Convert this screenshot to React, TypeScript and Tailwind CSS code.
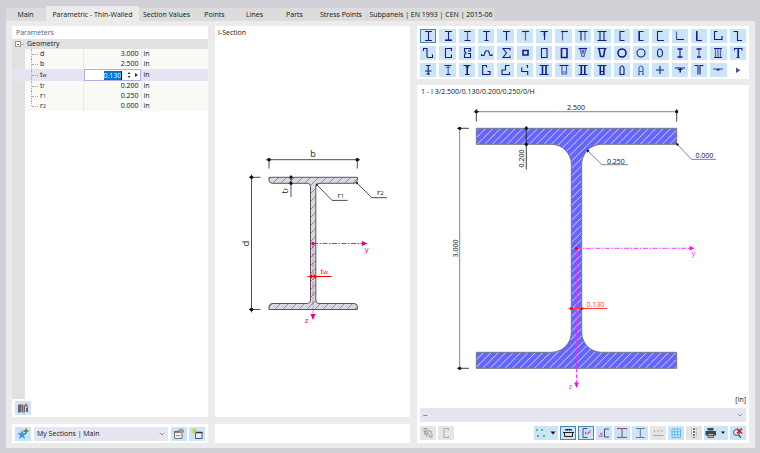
import type { ReactNode } from 'react'
import { ChevronDown } from 'lucide-react'

const tabs = ['Main', 'Parametric - Thin-Walled', 'Section Values', 'Points', 'Lines', 'Parts', 'Stress Points', 'Subpanels | EN 1993 | CEN | 2015-06']

const tabWidths = ['w-10', 'w-[93px]', 'w-14', 'w-10', 'w-10', 'w-10', 'w-[53px]', 'w-[127px]']

interface Param {
  name: string
  sub?: string
  value: string
}

const params: Param[] = [
  { name: 'd', value: '3.000' },
  { name: 'b', value: '2.500' },
  { name: 't', sub: 'w', value: '0.130' },
  { name: 't', sub: 'f', value: '0.200' },
  { name: 'r', sub: '1', value: '0.250' },
  { name: 'r', sub: '2', value: '0.000' },
]

// d: full-strength strokes, t: heavy strokes, l: faded strokes, on a 16 x 14 box
interface Shape {
  label: string
  d?: string
  t?: string
  l?: string
}

const shapes: Shape[] = [
  { label: 'I-section', d: 'M5 2.5h7M5 11.5h7M8.5 2.5v9' },
  { label: 'I-section, heavy flanges', d: 'M5 2.5h7M8.5 2.5v9', t: 'M5 11.2h7' },
  { label: 'I-section, tapered', d: 'M5 2.5h7M5.5 11.5h6', l: 'M8.5 2.5v9' },
  { label: 'I-section, unsymmetric', d: 'M5 2.5h7M6.5 11.5h4M8.5 2.5v9' },
  { label: 'T-section', d: 'M5 2.5h7M8.5 2.5v9' },
  { label: 'T-section, rolled', d: 'M5 2.5h7', l: 'M8.5 2.5v9' },
  { label: 'T-section, tapered', d: 'M4.5 2.5h7.5M8.5 2.5v8.500', t: 'M8.5 3v4' },
  { label: 'T-section, offset', d: 'M5 2.5h7', l: 'M6.5 2.5v9' },
  { label: 'Double T', d: 'M3.5 2.5h9M6 2.5v9', l: 'M10 2.5v9' },
  { label: 'Double web I', d: 'M3.5 2.5h9M3.5 11.5h9M6 2.5v9M10 2.5v9' },
  { label: 'Channel', d: 'M10.5 2.5H6V11.5H10.5' },
  { label: 'Channel, heavy', d: 'M10.5 2.5H6.5M6.5 11.5H10.5', t: 'M6.2 2v10' },
  { label: 'Channel, unsymmetric', d: 'M10.5 2.5H5.500V11.5H12' },
  { label: 'Angle', l: 'M4.5 2.5v8', d: 'M4.5 10.5h7.5' },
  { label: 'Angle, heavy', t: 'M5.8 2v9.500', d: 'M5.500 11.5h5.500' },
  { label: 'Angle with lips', d: 'M7.5 2.5H4.5V10.5h7.5V7' },
  { label: 'Z-section', d: 'M3.5 2.5h4v9h4.500' },
  { label: 'Z-section with lips', d: 'M3.5 5V2.5h3.500v8q0 1 1 1h4.500v-3' },
  { label: 'C-section', d: 'M11.5 5V2.5H5.5v9h6v-3' },
  { label: 'Stiffened C', d: 'M9 5h2.5V2.5H5.5v3L7 7L5.500 8.500v3h6v-4H9' },
  { label: 'Hat section', d: 'M3.500 8v1.500h2.500L7.5 5h3l1.500 4.500h2V8' },
  { label: 'Sigma section', d: 'M12 4.500V2.5H5L8.500 7L5 11.5h7v-2' },
  { label: 'Square tube', t: 'M6 4.500h5v4.500H6z' },
  { label: 'Rectangular tube', d: 'M5.500 2.5h5.500v9H5.500z' },
  { label: 'Box section', d: 'M5 2.5h6', t: 'M5.500 2v9.500h5.500V2' },
  { label: 'Trapezoid', d: 'M3.500 2.5h8.500', l: 'M5 2.5l2 8h2l2-8M7 3.500l1 4l1-4' },
  { label: 'Trapezoid, closed', d: 'M3.500 2.5h9', t: 'M5 2.5l1.500 8h3L11 2.5' },
  { label: 'Pipe', t: 'M12 7a4 4 0 1 1-8 0a4 4 0 1 1 8 0' },
  { label: 'Thin pipe', d: 'M12 7a4 4 0 1 1-8 0a4 4 0 1 1 8 0' },
  { label: 'Elliptical pipe', d: 'M10.500 7a2.500 4 0 1 1-5 0a2.500 4 0 1 1 5 0' },
  { label: 'Rail-type I', t: 'M5.500 3h5M5.500 11h5', d: 'M8 3v8.500' },
  { label: 'Rail-type I, slim', t: 'M5.500 3h5M6 11h4', l: 'M8 3v8.500' },
  { label: 'Paired channels', d: 'M4 2.5h8M4 11.5h8', l: 'M5.500 2.5v9M8 2.5v9M10.500 2.5v9' },
  { label: 'T with lips', d: 'M4.500 4.500V2.5h7.500v2M6.500 11.5h3', t: 'M8.200 2.5v9' },
  { label: 'I with stiffener', d: 'M6 2.500h4.500M5 8h6.500M8.200 2v10M6.500 11h3.500' },
  { label: 'I with plate', d: 'M4.500 2.5h7M6 11.5h4.500', l: 'M6 4.500h4M8.200 2.5v9' },
  { label: 'T with foot', d: 'M4.500 2.5h7M6 11.5h4.500M6.500 4h3.500', t: 'M8.200 2.5v9' },
  { label: 'Folded channel', d: 'M8.500 4.500V2.5H4.700v9H12V8.500H9.500' },
  { label: 'Folded angle', d: 'M11.500 2.5H7.500V7H4v4.500h7.500V9' },
  { label: 'Stepped angle', d: 'M11 2.500H9.500M10.500 2v3M4.700 4.500v4h6v3.500' },
  { label: 'Two I-sections', d: 'M3.500 2.5h9M3.500 11.5h9', t: 'M6.500 2.5v9M10 2.5v9' },
  { label: 'Double web T', d: 'M3.500 2.5h9', l: 'M6 2.5v8.500h4.500v-8.500M6 9h4.500' },
  { label: 'Two I with plate', d: 'M3.500 2.5h9M3.500 11.5h9', t: 'M6.300 3v8.500M9.800 3v8.500' },
  { label: 'Two T-sections', d: 'M3.500 2.5h9M5.500 11.5h5M6 8.500h4', t: 'M6.300 2.5v9M9.800 2.5v9' },
  { label: 'Arch tube', d: 'M6 11.5V5q2-4.500 4 0v6.500z' },
  { label: 'Arch tube, open', l: 'M6 11.500V5q2-4.500 4 0v6.500M5 11.500h2M9 11.500h2M6 8.500h4' },
  { label: 'Cruciform', d: 'M8 3v8M4 7h8' },
  { label: 'Wide T', d: 'M3 5h10M6 6.500h4.500', t: 'M8.200 5v4.500' },
  { label: 'Back-to-back angles', d: 'M3.500 2.5h3.500v9M12.500 2.5H9v9' },
  { label: 'Shallow T', l: 'M3 6h10', t: 'M6.500 6.700h3' },
]

function ShapeIcon({ shape }: { shape: Shape }) {
  return (
    <svg viewBox="0 0 16 14" className="h-[14px] w-4" fill="none" stroke="#171c8e" aria-hidden="true">
      {shape.l && <path d={shape.l} strokeWidth="1.2" opacity=".65" />}
      {shape.d && <path d={shape.d} strokeWidth="1.1" />}
      {shape.t && <path d={shape.t} strokeWidth="1.6" />}
    </svg>
  )
}

interface ToolButtonProps {
  label: string
  state?: 'normal' | 'active' | 'disabled'
  wide?: boolean
  children: ReactNode
}

function ToolButton({ label, state = 'normal', wide, children }: ToolButtonProps) {
  const colors = {
    normal: 'bg-[#cce4f7]',
    active: 'bg-[#cce4f7] outline outline-1 -outline-offset-1 outline-[#4c88b8]',
    disabled: 'bg-[#e5e5e5]',
  }[state]
  return (
    <button
      type="button"
      aria-label={label}
      disabled={state === 'disabled'}
      className={`flex h-[14px] shrink-0 items-center justify-center ${wide ? 'w-6' : 'w-4'} ${colors}`}
    >
      <svg viewBox={wide ? '0 0 24 14' : '0 0 16 14'} className="h-full w-full" fill="none" aria-hidden="true">
        {children}
      </svg>
    </button>
  )
}

function Picker({ label, value }: { label: string; value: string }) {
  return (
    <div className="relative min-w-0 flex-1">
      <select aria-label={label} className="block h-[14px] w-full appearance-none bg-[#e6e6f1] px-[3px] text-[7px] leading-[14px] text-[#111] outline-none">
        <option>{value}</option>
      </select>
      <ChevronDown className="pointer-events-none absolute top-[3px] right-[2px] h-2 w-2 text-[#666]" />
    </div>
  )
}

function ParameterPanel() {
  return (
    <section className="flex flex-col bg-white">
      <h2 className="h-[13px] pl-1 text-[7px] leading-[13px] font-medium text-[#4c5c84]">Parameters</h2>
      <div className="flex h-[10px] items-center bg-[#e1e1e1] pl-[3px]">
        <button type="button" aria-label="Collapse Geometry" className="flex h-[6px] w-[6px] items-center justify-center border border-[#999] bg-white">
          <span className="h-px w-[2px] bg-[#555]" />
        </button>
        <span className="w-[3px] border-t border-dotted border-[#999]" />
        <span className="pl-[3px] text-[7px] leading-[10px] font-medium text-[#111]">Geometry</span>
      </div>
      <table className="w-full table-fixed border-collapse text-[7px] leading-[10px] text-[#111]">
        <tbody>
          {params.map((p, i) => {
            const editing = p.sub === 'w'
            return (
              <tr key={p.name + p.sub} className={editing ? 'h-3 bg-[#e4e4f3]' : 'h-[10px] bg-[#f9faf5]'}>
                <td className={`w-[13px] p-0 ${editing ? '' : 'bg-[#e1e1e1]'}`} />
                <th scope="row" className="w-[58px] p-0 text-left font-normal">
                  <div className="flex items-center">
                    <span className={`ml-[6px] w-0 self-stretch border-l border-dotted border-[#aaa] ${i === params.length - 1 ? 'mb-[5px]' : ''}`} />
                    <span className="mr-[2px] w-[6px] border-t border-dotted border-[#aaa]" />
                    <span className={p.sub ? '' : 'font-medium'}>
                      {p.name}
                      {p.sub && <span className="text-[5px]">{p.sub}</span>}
                    </span>
                  </div>
                </th>
                <td className="w-[58px] border-x border-[#e8e8ee] p-0 text-right">
                  {editing ? (
                    <div className="flex h-3 items-center border border-[#b0aee6] bg-white">
                      <span className="flex-1" />
                      <input
                        aria-label="Web thickness"
                        defaultValue={p.value}
                        className="h-[9px] w-[18px] border-r border-black bg-[#0078d7] p-0 text-right text-[7px] leading-[9px] text-white outline-none"
                      />
                      <svg viewBox="0 0 18 10" className="h-[10px] w-[18px]" fill="#333" aria-hidden="true">
                        <path d="M5.5 4L7 2l1.5 2zM5.5 6L7 8l1.5-2zM13 3l3 2l-3 2z" />
                      </svg>
                    </div>
                  ) : (
                    <span className="block pr-[2px]">{p.value}</span>
                  )}
                </td>
                <td className="p-0 pl-[2px]">in</td>
              </tr>
            )
          })}
        </tbody>
      </table>
      <div className="w-[13px] flex-1 bg-[#e1e1e1]" />
      <div className="px-[3px] py-[2px]">
        <ToolButton label="Library">
          <path d="M3 4l3-1v8l-3 1zM6.5 3l2 1v8l-2-1zM9 5l1-1v7l-1 1zM11 7l2-1v5h-2z" fill="#666" />
          <path d="M8.500 5.500l2.500-3.500L13.500 5.500z" fill="#d94f5c" />
        </ToolButton>
      </div>
    </section>
  )
}

const previewOutline =
  'M269 177.300h88.400v3q-.5 3-3.400 3H319q-3.200 0-3.200 3.200V300q0 3.500 3.200 3.500h35q3 0 3.400 3v3H269v-3q.5-3 3.400-3H307.500q3 0 3-3.500V186.500q0-3.200-3-3.200H272.400q-3 0-3.400-3z'

function SectionPreview() {
  return (
    <section className="flex flex-col bg-white">
      <h2 className="h-[13px] px-[3px] text-[7px] leading-[14px] text-[#111]">I-Section</h2>
      <svg viewBox="215 39 195 378" className="min-h-0 w-full flex-1 font-['Open_Sans','Noto_Sans',sans-serif]" role="img" aria-label="Dimension sketch of the I-section">
        <defs>
          <pattern id="hatch-gray" width="8" height="8" patternUnits="userSpaceOnUse">
            <path d="M-1 9L9-1M-1 1L1-1M7 9l2-2" stroke="#85858f" strokeWidth=".9" />
          </pattern>
        </defs>
        <path d={previewOutline} fill="#d8d8e2" />
        <path d={previewOutline} fill="url(#hatch-gray)" stroke="#555" />
        <g stroke="#222" strokeWidth=".8" fill="none">
          <path d="M266 159.700h94M269 158v10.500M357.300 158v10.500" />
          <path d="M251.500 174.500v138M249 177.300h11.500M249 309.500h11.500" />
          <path d="M291 175v22M316.500 184.500L332 200.400h15.700M356.500 182.500l15.300 15.200H387" />
        </g>
        <g fill="#111">
          <circle cx="269" cy="159.700" r="1.800" />
          <circle cx="357.300" cy="159.700" r="1.800" />
          <circle cx="251.500" cy="177.300" r="1.800" />
          <circle cx="251.500" cy="309.500" r="1.800" />
          <circle cx="291" cy="177.300" r="1.600" />
          <circle cx="291" cy="183.300" r="1.600" />
          <path d="M315.500 183.500l3 1.200l-1.800 1.800zM355.500 181.500l3 1.200l-1.800 1.800z" />
        </g>
        <g fill="#222" fontSize="9">
          <text x="313" y="157" textAnchor="middle">b</text>
          <text transform="translate(249 243.500) rotate(-90)" textAnchor="middle">d</text>
          <text transform="translate(288 193.500) rotate(-90)">t<tspan fontSize="6">f</tspan></text>
          <text x="337.500" y="197.500" fontSize="8">r<tspan fontSize="6">1</tspan></text>
          <text x="377" y="195" fontSize="8">r<tspan fontSize="6">2</tspan></text>
        </g>
        <g stroke="#e6007e" strokeWidth=".9" fill="#e6007e">
          <path d="M313 243.500h49" strokeDasharray="5 1.500 1.500 1.500" />
          <path d="M313 243.500v70" strokeDasharray="5 1.500 1.500 1.500" strokeOpacity=".6" />
          <path d="M362 241l5.500 2.500l-5.500 2.500zM310.500 314l2.500 6l2.500-6z" stroke="none" />
          <circle cx="313" cy="243.500" r="1.700" stroke="none" />
        </g>
        <g fill="#e6007e" fontSize="8">
          <text x="366.500" y="252" textAnchor="middle">y</text>
          <text x="306.500" y="323" textAnchor="middle">z</text>
        </g>
        <path d="M307.500 276.500h24" stroke="#f00" />
        <path d="M309 276.500l3-1.800v3.600zM317 276.500l-3-1.800v3.600z" fill="#f00" stroke="#f00" strokeWidth=".5" />
        <text x="320.500" y="273.500" fill="#f00" fontSize="8">t<tspan fontSize="6">w</tspan></text>
      </svg>
    </section>
  )
}

const outline =
  'M476.300 128.300H676.700V144.300H601.700A20 20 0 0 0 581.700 164.300V332.300A20 20 0 0 0 601.700 352.300H676.700V368.300H476.300V352.300H551.300A20 20 0 0 0 571.300 332.300V164.300A20 20 0 0 0 551.300 144.300H476.300Z'

function SectionDrawing() {
  return (
    <svg viewBox="417 98 332 297" className="min-h-0 w-full flex-1 font-['Open_Sans','Noto_Sans',sans-serif]" role="img" aria-label="Section drawing with dimensions">
      <defs>
        <pattern id="hatch-blue" width="7.400" height="7.400" patternUnits="userSpaceOnUse">
          <path d="M-1 8.400L8.400-1M-1 1L1-1M6.400 8.400l2-2" stroke="#e4e4ff" strokeWidth=".9" />
        </pattern>
      </defs>
      <path d={outline} fill="#6464ff" />
      <path d={outline} fill="url(#hatch-blue)" stroke="#777784" />
      <g stroke="#666" strokeWidth=".8" fill="none">
        <path d="M476.300 111.700h200.400M459.700 128.300v240" />
        <path d="M588 151l14 13.700h26M677 144l14.500 15.400H716" />
      </g>
      <g stroke="#111" strokeWidth=".8">
        <path d="M474 111.700h5M676.700 109v12.500M476.300 109v12.500M457 128.300h12M457 368.300h12M526.300 126v43.500" />
      </g>
      <g fill="#111">
        <circle cx="476.300" cy="111.700" r="1.600" />
        <circle cx="676.700" cy="111.700" r="1.600" />
        <circle cx="459.700" cy="128.300" r="1.600" />
        <circle cx="459.700" cy="368.300" r="1.600" />
        <circle cx="526.300" cy="128.300" r="1.600" />
        <circle cx="526.300" cy="144.300" r="1.600" />
        <path d="M586.500 149.500l3.200 1l-2.200 2.200zM676 143l3.200 1l-2.200 2.200z" />
      </g>
      <g fill="#111" fontSize="7">
        <text x="576" y="109.500" textAnchor="middle">2.500</text>
        <text transform="translate(458 248.500) rotate(-90)" textAnchor="middle">3.000</text>
        <text transform="translate(524 158.500) rotate(-90)" textAnchor="middle">0.200</text>
        <text x="607" y="163.500">0.250</text>
        <text x="695.500" y="157.500">0.000</text>
      </g>
      <g stroke="#ff20ff" strokeWidth=".9">
        <path d="M576.500 248.300H690" strokeDasharray="5 1.500 1.500 1.500" />
        <path d="M576.500 248.300V383" strokeDasharray="4 2" />
      </g>
      <path d="M689.500 246l5 2.300l-5 2.300zM574.200 382.500l2.300 5.500l2.300-5.500z" fill="#f0f" />
      <circle cx="576.500" cy="248.300" r="1.600" fill="#f00" />
      <g fill="#ff20ff" fontSize="7">
        <text x="693.500" y="256" textAnchor="middle">y</text>
        <text x="570.500" y="389" textAnchor="middle">z</text>
      </g>
      <path d="M568.500 308.500h38.500" stroke="#ff4040" />
      <circle cx="571.300" cy="308.500" r="1.600" fill="#f00" />
      <circle cx="581.700" cy="308.500" r="1.600" fill="#f00" />
      <text x="586.500" y="306.500" fill="#f33" fontSize="7">0.130</text>
    </svg>
  )
}

function Toolbar() {
  return (
    <div className="flex items-center gap-[2px] px-[3px] pt-1 pb-[3px]">
      <ToolButton label="Copy section" state="disabled">
        <path d="M4 2.500h3v3H4zM4 8h3v3M8 5h3v3M9 11h3V8M7 6l3 4M4 6l3 2" stroke="#999" />
      </ToolButton>
      <ToolButton label="Mirror section" state="disabled">
        <path d="M10.500 4V2.500H6v9H10.500V10" stroke="#aaa" />
      </ToolButton>
      <div className="flex-1" />
      <ToolButton label="Stress points" wide>
        <path d="M2 3h2v2H2zM7 3h2v2H7zM3 9h2v2H3zM9 9h2v2H9z" fill="#42cc58" />
        <path d="M16.500 5.500h5L19 8.500z" fill="#111" />
      </ToolButton>
      <ToolButton label="Dimensions" state="active">
        <path d="M4.500 6.500v4h8v-4z" fill="#cfe0f0" stroke="#222" />
        <path d="M3 6.500h2.500M11.500 6.500H14M5.500 4.500v-1h6v1M7.200 3v2M9.800 3v2" stroke="#222" />
      </ToolButton>
      <ToolButton label="Local axes" state="active">
        <path d="M9.500 2.500H5v9h4.500" stroke="#444f7c" />
        <path d="M7 7h5M12 3.500v3.500M7.500 5.500v3M9.500 8.500l1.500-3" stroke="#d75a9d" strokeWidth=".9" />
      </ToolButton>
      <ToolButton label="Principal axes">
        <path d="M13 3H8.500v8H13" stroke="#444f7c" />
        <path d="M3 10.500l3-4v4zM4 6.500l3 4" stroke="#cf72a7" strokeWidth=".9" />
      </ToolButton>
      <ToolButton label="Parts">
        <path d="M3.500 2.500h9M3.500 11.500h9M8 2.500v9" stroke="#555f7c" />
        <path d="M3 2h1.500v1.500H3zM11.500 2H13v1.500h-1.500zM3 10.500h1.500V12H3zM11.500 10.500H13V12h-1.500zM7 2h2v1.500H7zM7 10.500h2V12H7z" fill="#e0505e" />
      </ToolButton>
      <ToolButton label="Outline">
        <path d="M4 2.500h8.500M4 11.500h8.500M8.300 2.500v9" stroke="#5b7899" />
      </ToolButton>
      <ToolButton label="Part numbers" state="disabled">
        <path d="M3 9.500h10.500M4.500 4v2M8.300 4v2M12 4v2" stroke="#aaa" />
      </ToolButton>
      <ToolButton label="Grid">
        <path d="M4 3h8.500v8.500H4zM6.800 3v8.500M9.700 3v8.500M4 5.800h8.500M4 8.700h8.500" stroke="#5bb9f0" fill="#d9f0ff" />
      </ToolButton>
      <ToolButton label="Point numbers" state="disabled">
        <path d="M8 2v10" stroke="#777" strokeDasharray="2 1" strokeWidth="2" />
        <path d="M5.500 2v10M10.500 2v10" stroke="#aaa" strokeDasharray="1 1" />
      </ToolButton>
      <ToolButton label="Print" wide>
        <path d="M3.500 2h6v2.500h-6zM1.500 5h10.500v4.500H1.500z" fill="#444" />
        <path d="M3.500 8h6.500v4H3.500z" fill="#666" />
        <path d="M4.500 8.500h4.500M4.500 10.500h4.500" stroke="#ddd" strokeWidth=".7" />
        <path d="M17 5.500h4L19 8z" fill="#111" />
      </ToolButton>
      <ToolButton label="Reset view">
        <circle cx="6.500" cy="6.500" r="3" stroke="#555" />
        <path d="M8.500 9l2.500 2.500" stroke="#555" strokeWidth="1.500" />
        <path d="M7 2.500l5 5M12 2.500l-5 5" stroke="#e01818" strokeWidth="1.700" />
      </ToolButton>
    </div>
  )
}

export default function App() {
  return (
    <div className="flex min-h-screen flex-col bg-[#d1d0d6] pt-[6px] pr-[5px] pb-[5px] pl-[6px] font-['Open_Sans','Noto_Sans',sans-serif] text-[#111]">
      <div role="tablist" className="flex items-end">
        {tabs.map((tab, i) => (
          <button
            key={tab}
            type="button"
            role="tab"
            aria-selected={i === 1}
            className={`shrink-0 text-center text-[7px] whitespace-nowrap ${tabWidths[i]} ${
              i === 1 ? 'h-[15px] bg-[#ebebeb] leading-[17px]' : 'h-[13px] border-r border-[#d6d6d6] bg-[#dcdcdc] leading-[13px]'
            }`}
          >
            {tab}
          </button>
        ))}
      </div>

      <main className="grid flex-1 grid-cols-[196fr_195fr_332fr] gap-[7px] bg-[#ebebeb] px-[6px] py-[5px]">
        <div className="grid grid-rows-[1fr_auto] gap-[7px]">
          <ParameterPanel />
          <div className="flex gap-[3px] bg-white px-[3px] pt-[3px] pb-[2px]">
            <ToolButton label="Add to favorites">
              <path d="M7 3l1.300 3h3.700L9 8.500l1 3.500L7 10l-3 2l1-3.500L2.500 6h3.200z" fill="#3b9ae8" />
              <path d="M11 1.500v5M8.500 4h5" stroke="#66752b" strokeWidth="1.500" />
            </ToolButton>
            <Picker label="Favorites group" value="My Sections | Main" />
            <div className="flex gap-[2px]">
              <ToolButton label="Manage sections">
                <path d="M3.500 4.500h7.500v7H3.500z" fill="#eee" stroke="#777" />
                <path d="M3 5h8.500" stroke="#666" strokeWidth="1.500" />
                <path d="M6 3.500l4-2l3 1.500v2.500l-3 1L8.500 5z" fill="#c08e74" />
                <path d="M5 8.500h4" stroke="#999" />
              </ToolButton>
              <ToolButton label="New group">
                <path d="M6.500 5.500h6.500v6H6.500z" fill="#e8f0fa" stroke="#556" />
                <path d="M6 5.500h7.500" stroke="#334" strokeWidth="1.500" />
                <path d="M5 1v6M2 4h6M3 2l4 4M7 2L3 6" stroke="#c5cf24" strokeWidth=".9" />
              </ToolButton>
            </div>
          </div>
        </div>

        <div className="grid grid-rows-[1fr_auto] gap-[7px]">
          <SectionPreview />
          <div className="h-[19px] bg-white" />
        </div>

        <div className="flex flex-col gap-[6px]">
          <div className="grid grid-cols-[repeat(17,minmax(0,1fr))] gap-[3px] bg-white px-[3px] pt-[3px] pb-[2px]">
            {shapes.map((shape, i) => (
              <button
                key={shape.label}
                type="button"
                aria-label={shape.label}
                className={`flex h-[14px] items-center justify-center bg-[#cce4f7] ${i === 0 ? 'outline outline-1 -outline-offset-1 outline-[#4c88b8]' : ''}`}
              >
                <ShapeIcon shape={shape} />
              </button>
            ))}
            <button type="button" aria-label="More sections" className="flex h-[14px] items-center justify-center">
              <svg viewBox="0 0 16 14" className="h-[14px] w-4" aria-hidden="true">
                <path d="M6 4.500l4.500 2.700L6 10z" fill="#4a4aaa" />
              </svg>
            </button>
          </div>

          <section className="flex flex-1 flex-col bg-white">
            <h2 className="h-[13px] px-1 text-[7px] leading-[13px] text-[#111]">1 - I 3/2.500/0.130/0.200/0.250/0/H</h2>
            <SectionDrawing />
            <div className="h-[13px] px-[3px] text-right text-[7px] leading-[10px]">[in]</div>
            <div className="flex px-[3px]">
              <Picker label="Result display" value="--" />
            </div>
            <Toolbar />
          </section>
        </div>
      </main>
    </div>
  )
}
